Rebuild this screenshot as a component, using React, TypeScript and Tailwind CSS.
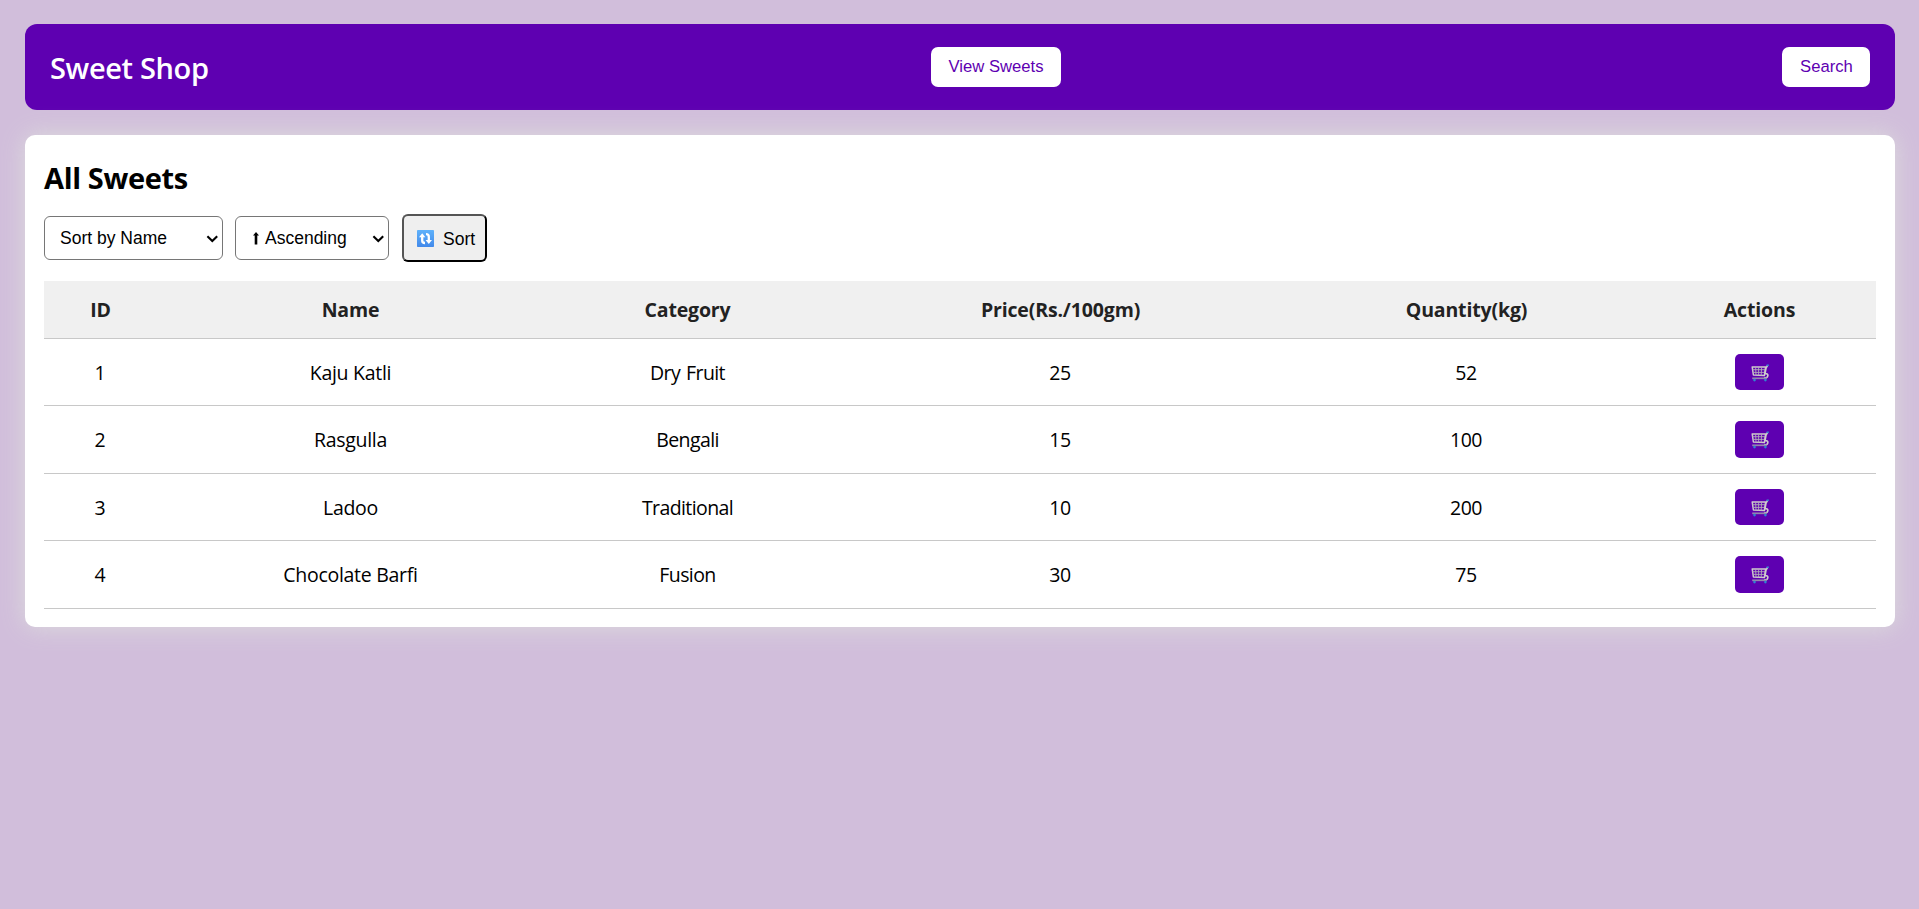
import type { ReactNode } from "react";

type Sweet = { id: number; name: string; category: string; price: number; quantity: number; row: string; cell: string; button: string };

const sweets: Sweet[] = [
  { id: 1, name: "Kaju Katli", category: "Dry Fruit", price: 25, quantity: 52, row: "h-[67px]", cell: "pt-0.5", button: "h-9" },
  { id: 2, name: "Rasgulla", category: "Bengali", price: 15, quantity: 100, row: "h-[68px]", cell: "pt-0", button: "h-[37px]" },
  { id: 3, name: "Ladoo", category: "Traditional", price: 10, quantity: 200, row: "h-[67px]", cell: "pt-0.5", button: "h-9" },
  { id: 4, name: "Chocolate Barfi", category: "Fusion", price: 30, quantity: 75, row: "h-[68px]", cell: "pt-0", button: "h-[37px]" },
];

const headings = ["ID", "Name", "Category", "Price(Rs./100gm)", "Quantity(kg)", "Actions"];

function CartIcon() {
  return (
    <svg width="18" height="18" viewBox="0 0 18 18" fill="none" aria-hidden="true">
      <path d="M1.2 3H14.6L13.4 11.6L2.4 11Z" stroke="#cfcbcd" strokeWidth="1.5" strokeLinejoin="round" />
      <path d="M4.6 3.2L5 11.2M7.6 3.2V11.4M10.6 3.2L10.2 11.4M1.6 5.7H14M2 8.4H13.6" stroke="#b3abb9" strokeWidth="0.9" />
      <path d="M16.4 1.8L15 4L14 9.8C16 9.3 17.3 10.4 16.7 12.2C16.2 13.8 14.6 14.1 13.2 13.4" stroke="#cfcbcd" strokeWidth="1.6" />
      <path d="M1.2 14.3H15.8" stroke="#9585ae" strokeWidth="1.7" />
      <path d="M15.6 1.3H17.8" stroke="#3a8ed0" strokeWidth="1.6" />
      <circle cx="3.5" cy="16.1" r="1.3" fill="#2f86cf" />
      <circle cx="14.4" cy="16.1" r="1.3" fill="#2f86cf" />
    </svg>
  );
}

function SortIcon() {
  return (
    <svg width="17" height="17" viewBox="0 0 17 17" aria-hidden="true">
      <defs>
        <linearGradient id="tile" x1="0" y1="0" x2="0" y2="1">
          <stop offset="0" stopColor="#5fb2fb" />
          <stop offset="1" stopColor="#4289ea" />
        </linearGradient>
      </defs>
      <rect width="17" height="17" rx="0.8" fill="url(#tile)" />
      <path d="M5.2 6V10.4C5.2 12.2 6 13 8 13" fill="none" stroke="#fff" strokeWidth="2.3" />
      <path d="M2 7.2L5.2 3.2L8.4 7.2Z" fill="#fff" />
      <path d="M9 4.2C11 4.2 11.8 5 11.8 6.8V11" fill="none" stroke="#fff" strokeWidth="2.3" />
      <path d="M8.6 10L11.8 14L15 10Z" fill="#fff" />
    </svg>
  );
}

function Dropdown({ className, children }: { className: string; children: ReactNode }) {
  return (
    <button className={`flex h-11 items-center justify-between rounded-md border border-[#767676] bg-white pr-[3px] text-[17.5px] leading-5 text-black ${className}`}>
      <span className="flex items-center">{children}</span>
      <svg width="13" height="8" viewBox="0 0 13 8" fill="none" className="mt-0.5" aria-hidden="true">
        <path d="M1.4 1.2L6.3 6L11.2 1.2" stroke="#000" strokeWidth="2.1" />
      </svg>
    </button>
  );
}

export default function App() {
  return (
    <div className="min-h-screen bg-[#d1bedb] pt-6 pr-6 pl-[25px] font-['Open_Sans',sans-serif] text-black">
      <header className="flex h-[86px] items-center justify-between rounded-xl bg-[#5e00b1] px-[25px]">
        <h1 className="w-[160px] pt-0.5 text-[29px] leading-10 font-semibold tracking-[-0.35px] whitespace-nowrap text-white">Sweet Shop</h1>
        <button className="h-10 w-[130px] rounded-[7px] bg-white pb-0.5 font-['Liberation_Sans',sans-serif] text-[16.67px] text-[#5e00b1]">View Sweets</button>
        <button className="h-10 w-[88px] rounded-[7px] bg-white pb-0.5 pl-px font-['Liberation_Sans',sans-serif] text-[16.67px] text-[#5e00b1]">Search</button>
      </header>

      <main className="mt-[25px] h-[492px] rounded-[10px] bg-white px-[19px] pt-[23px] shadow-[0_0_25px_#dddddd]">
        <h2 className="text-[29px] leading-10 font-bold tracking-[-0.35px]">All Sweets</h2>

        <div className="mt-4 flex h-12 items-center font-['Liberation_Sans',sans-serif]">
          <Dropdown className="w-[179px] pl-[15px]">Sort by Name</Dropdown>
          <Dropdown className="ml-3 w-[154px] pl-[17px]">
            <svg width="6" height="13" viewBox="0 0 6 13" className="mr-1.5" aria-hidden="true">
              <path d="M3 0L6 3.6H4.3V12.5H1.7V3.6H0Z" fill="#000" />
            </svg>
            Ascending
          </Dropdown>
          <button className="ml-[13px] flex h-12 w-[85px] items-center rounded-md border-2 border-t-[#555] border-r-black border-b-black border-l-[#555] bg-[#efefef] pl-[13px] text-[17.5px] leading-5">
            <SortIcon />
            <span className="pt-px pl-[9px]">Sort</span>
          </button>
        </div>

        <table className="mt-[19px] w-[1832px] table-fixed border-separate border-spacing-0 text-center text-[19.5px] leading-6">
          <colgroup>
            <col className="w-[112px]" />
            <col className="w-[388px]" />
            <col className="w-[286px]" />
            <col className="w-[460px]" />
            <col className="w-[352px]" />
            <col className="w-[234px]" />
          </colgroup>
          <thead>
            <tr className="h-[58px] bg-[#f0f0f0] text-[#222]">
              {headings.map((heading) => (
                <th key={heading} className="border-b border-[#c8c8c8] p-0 pl-px font-bold tracking-[-0.15px]">{heading}</th>
              ))}
            </tr>
          </thead>
          <tbody>
            {sweets.map((sweet) => (
              <tr key={sweet.id} className={sweet.row}>
                <td className={`border-b border-[#c8c8c8] px-0 pb-0 ${sweet.cell}`}>{sweet.id}</td>
                <td className={`border-b border-[#c8c8c8] pr-0 pb-0 pl-px tracking-[-0.28px] ${sweet.cell}`}>{sweet.name}</td>
                <td className={`border-b border-[#c8c8c8] pr-0 pb-0 pl-px tracking-[-0.6px] [word-spacing:1.5px] ${sweet.cell}`}>{sweet.category}</td>
                <td className={`border-b border-[#c8c8c8] px-0 pb-0 tracking-[-0.5px] ${sweet.cell}`}>{sweet.price}</td>
                <td className={`border-b border-[#c8c8c8] px-0 pb-0 tracking-[-0.5px] ${sweet.cell}`}>{sweet.quantity}</td>
                <td className="border-b border-[#c8c8c8] p-0">
                  <button className={`mx-auto flex w-[49px] items-center justify-center rounded-[5px] bg-[#5e00b1] pt-px pl-0.5 ${sweet.button}`} aria-label="Buy">
                    <CartIcon />
                  </button>
                </td>
              </tr>
            ))}
          </tbody>
        </table>
      </main>
    </div>
  );
}
